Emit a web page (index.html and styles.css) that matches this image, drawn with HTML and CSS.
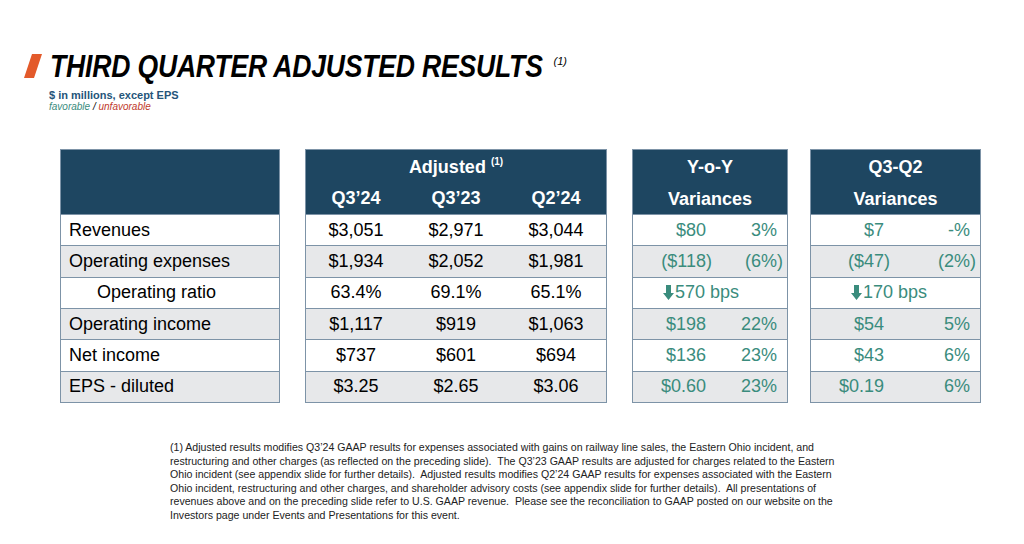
FILE: index.html
```html
<!DOCTYPE html>
<html>
<head>
<meta charset="utf-8">
<link rel="stylesheet" href="styles.css">
</head>
<body>
<div class="slide">
  <div class="title-row">
    <svg class="slash" width="18" height="24" viewBox="0 0 18 24"><polygon points="8,0 18,0 10,24 0,24" fill="#e35a2b"/></svg>
    <h1 class="title">THIRD QUARTER ADJUSTED RESULTS</h1>
    <sup class="title-note">(1)</sup>
  </div>
  <div class="sub">$ in millions, except EPS</div>
  <div class="legend"><span class="fav">favorable</span> / <span class="unfav">unfavorable</span></div>

  <div class="tables">
    <div class="panel labels">
      <div class="head"></div>
      <div class="row">Revenues</div>
      <div class="row alt">Operating expenses</div>
      <div class="row indent">Operating ratio</div>
      <div class="row alt">Operating income</div>
      <div class="row">Net income</div>
      <div class="row alt">EPS - diluted</div>
    </div>

    <div class="panel adjusted">
      <div class="head">
        <div class="hline">Adjusted <sup>(1)</sup></div>
        <div class="hline cols3"><span>Q3’24</span><span>Q3’23</span><span>Q2’24</span></div>
      </div>
      <div class="row cols3"><span>$3,051</span><span>$2,971</span><span>$3,044</span></div>
      <div class="row alt cols3"><span>$1,934</span><span>$2,052</span><span>$1,981</span></div>
      <div class="row cols3"><span>63.4%</span><span>69.1%</span><span>65.1%</span></div>
      <div class="row alt cols3"><span>$1,117</span><span>$919</span><span>$1,063</span></div>
      <div class="row cols3"><span>$737</span><span>$601</span><span>$694</span></div>
      <div class="row alt cols3"><span>$3.25</span><span>$2.65</span><span>$3.06</span></div>
    </div>

    <div class="panel var yoy">
      <div class="head">
        <div class="hline">Y-o-Y</div>
        <div class="hline">Variances</div>
      </div>
      <div class="row vrow"><span class="v np">$80</span><span class="p np">3%</span></div>
      <div class="row alt vrow"><span class="v">($118)</span><span class="p">(6%)</span></div>
      <div class="row bps"><svg class="arrow" width="11" height="15" viewBox="0 0 11 15"><path d="M3 0h5v8h3l-5.5 7L0 8h3z" fill="#3a8c7d"/></svg>570 bps</div>
      <div class="row alt vrow"><span class="v np">$198</span><span class="p np">22%</span></div>
      <div class="row vrow"><span class="v np">$136</span><span class="p np">23%</span></div>
      <div class="row alt vrow"><span class="v np">$0.60</span><span class="p np">23%</span></div>
    </div>

    <div class="panel var qq">
      <div class="head">
        <div class="hline">Q3-Q2</div>
        <div class="hline">Variances</div>
      </div>
      <div class="row vrow"><span class="v np">$7</span><span class="p np">-%</span></div>
      <div class="row alt vrow"><span class="v">($47)</span><span class="p">(2%)</span></div>
      <div class="row bps"><svg class="arrow" width="11" height="15" viewBox="0 0 11 15"><path d="M3 0h5v8h3l-5.5 7L0 8h3z" fill="#3a8c7d"/></svg>170 bps</div>
      <div class="row alt vrow"><span class="v np">$54</span><span class="p np">5%</span></div>
      <div class="row vrow"><span class="v np">$43</span><span class="p np">6%</span></div>
      <div class="row alt vrow"><span class="v np">$0.19</span><span class="p np">6%</span></div>
    </div>
  </div>

  <div class="footnote">
    <div>(1) Adjusted results modifies Q3’24 GAAP results for expenses associated with gains on railway line sales, the Eastern Ohio incident, and</div>
    <div>restructuring and other charges (as reflected on the preceding slide).&nbsp; The Q3’23 GAAP results are adjusted for charges related to the Eastern</div>
    <div>Ohio incident (see appendix slide for further details).&nbsp; Adjusted results modifies Q2’24 GAAP results for expenses associated with the Eastern</div>
    <div>Ohio incident, restructuring and other charges, and shareholder advisory costs (see appendix slide for further details).&nbsp; All presentations of</div>
    <div>revenues above and on the preceding slide refer to U.S. GAAP revenue.&nbsp; Please see the reconciliation to GAAP posted on our website on the</div>
    <div>Investors page under Events and Presentations for this event.</div>
  </div>
</div>
</body>
</html>
```

FILE: styles.css
```css
html, body {
  margin: 0;
  padding: 0;
  background: #ffffff;
}

.slide {
  width: 1024px;
  height: 544px;
  overflow: hidden;
  font-family: "Liberation Sans", Arial, sans-serif;
  color: #000;
}

.title-row {
  display: flex;
  align-items: flex-start;
  padding: 54px 0 0 24px;
  height: 26px;
}

.slash {
  display: block;
  margin-right: 8px;
}

.title {
  margin: 0 -83px 0 0;
  font-family: "Liberation Sans", sans-serif;
  font-weight: bold;
  font-style: italic;
  font-size: 31px;
  line-height: 25px;
  letter-spacing: -0.2px;
  transform: scaleX(0.856);
  transform-origin: 0 50%;
  white-space: nowrap;
}

.title-note {
  font-style: italic;
  font-size: 11px;
  line-height: 11px;
  margin-left: 11px;
  margin-top: 2px;
}

.sub {
  margin: 9px 0 0 49px;
  font-size: 11px;
  line-height: 13px;
  font-weight: bold;
  color: #25557a;
}

.legend {
  margin: -1px 0 0 49px;
  font-size: 10px;
  line-height: 11px;
  font-style: italic;
  color: #000;
}

.fav { color: #3a8c7d; }
.unfav { color: #c0392b; }

.tables {
  display: flex;
  margin: 37px 0 0 60px;
  height: 254px;
}

.panel {
  display: grid;
  grid-template-rows: 64px repeat(6, 1fr);
  border: 1px solid #7d93a7;
  box-sizing: border-box;
  height: 254px;
  background: #fff;
}

.labels { width: 220px; margin-right: 25px; }
.adjusted { width: 302px; margin-right: 25px; }
.yoy { width: 156px; margin-right: 22px; }
.qq { width: 171px; }

.head {
  background: #1e4661;
  color: #fff;
  font-weight: bold;
  font-size: 18px;
  display: grid;
  grid-template-rows: 32px 32px;
  text-align: center;
}

.hline {
  line-height: 34px;
}

.hline sup {
  font-size: 10px;
  vertical-align: 8px;
  line-height: 0;
}

.row {
  border-top: 1px solid #7d93a7;
  font-size: 18px;
  display: flex;
  align-items: center;
  padding-left: 8px;
  white-space: nowrap;
}

.row.alt { background: #e7e8ea; }

.row.indent { padding-left: 36px; }

.cols3 {
  display: grid;
  grid-template-columns: 1fr 1fr 1fr;
  align-items: center;
  padding-left: 0;
  text-align: center;
}

.hline.cols3 { line-height: 30px; }

.var .row { color: #3a8c7d; padding-left: 0; }

.vrow {
  display: grid;
  align-items: center;
}

.yoy .vrow { grid-template-columns: 79px 71px; }
.qq .vrow { grid-template-columns: 79px 86px; }

.v, .p { text-align: right; }
.np { padding-right: 6px; }

.bps { padding-left: 30px !important; }
.qq .bps { padding-left: 40px !important; }

.arrow {
  display: block;
  margin-right: 1px;
}

.footnote {
  margin: 38px 0 0 170px;
  font-size: 10.6px;
  line-height: 13.6px;
  color: #222;
  white-space: nowrap;
}
```
